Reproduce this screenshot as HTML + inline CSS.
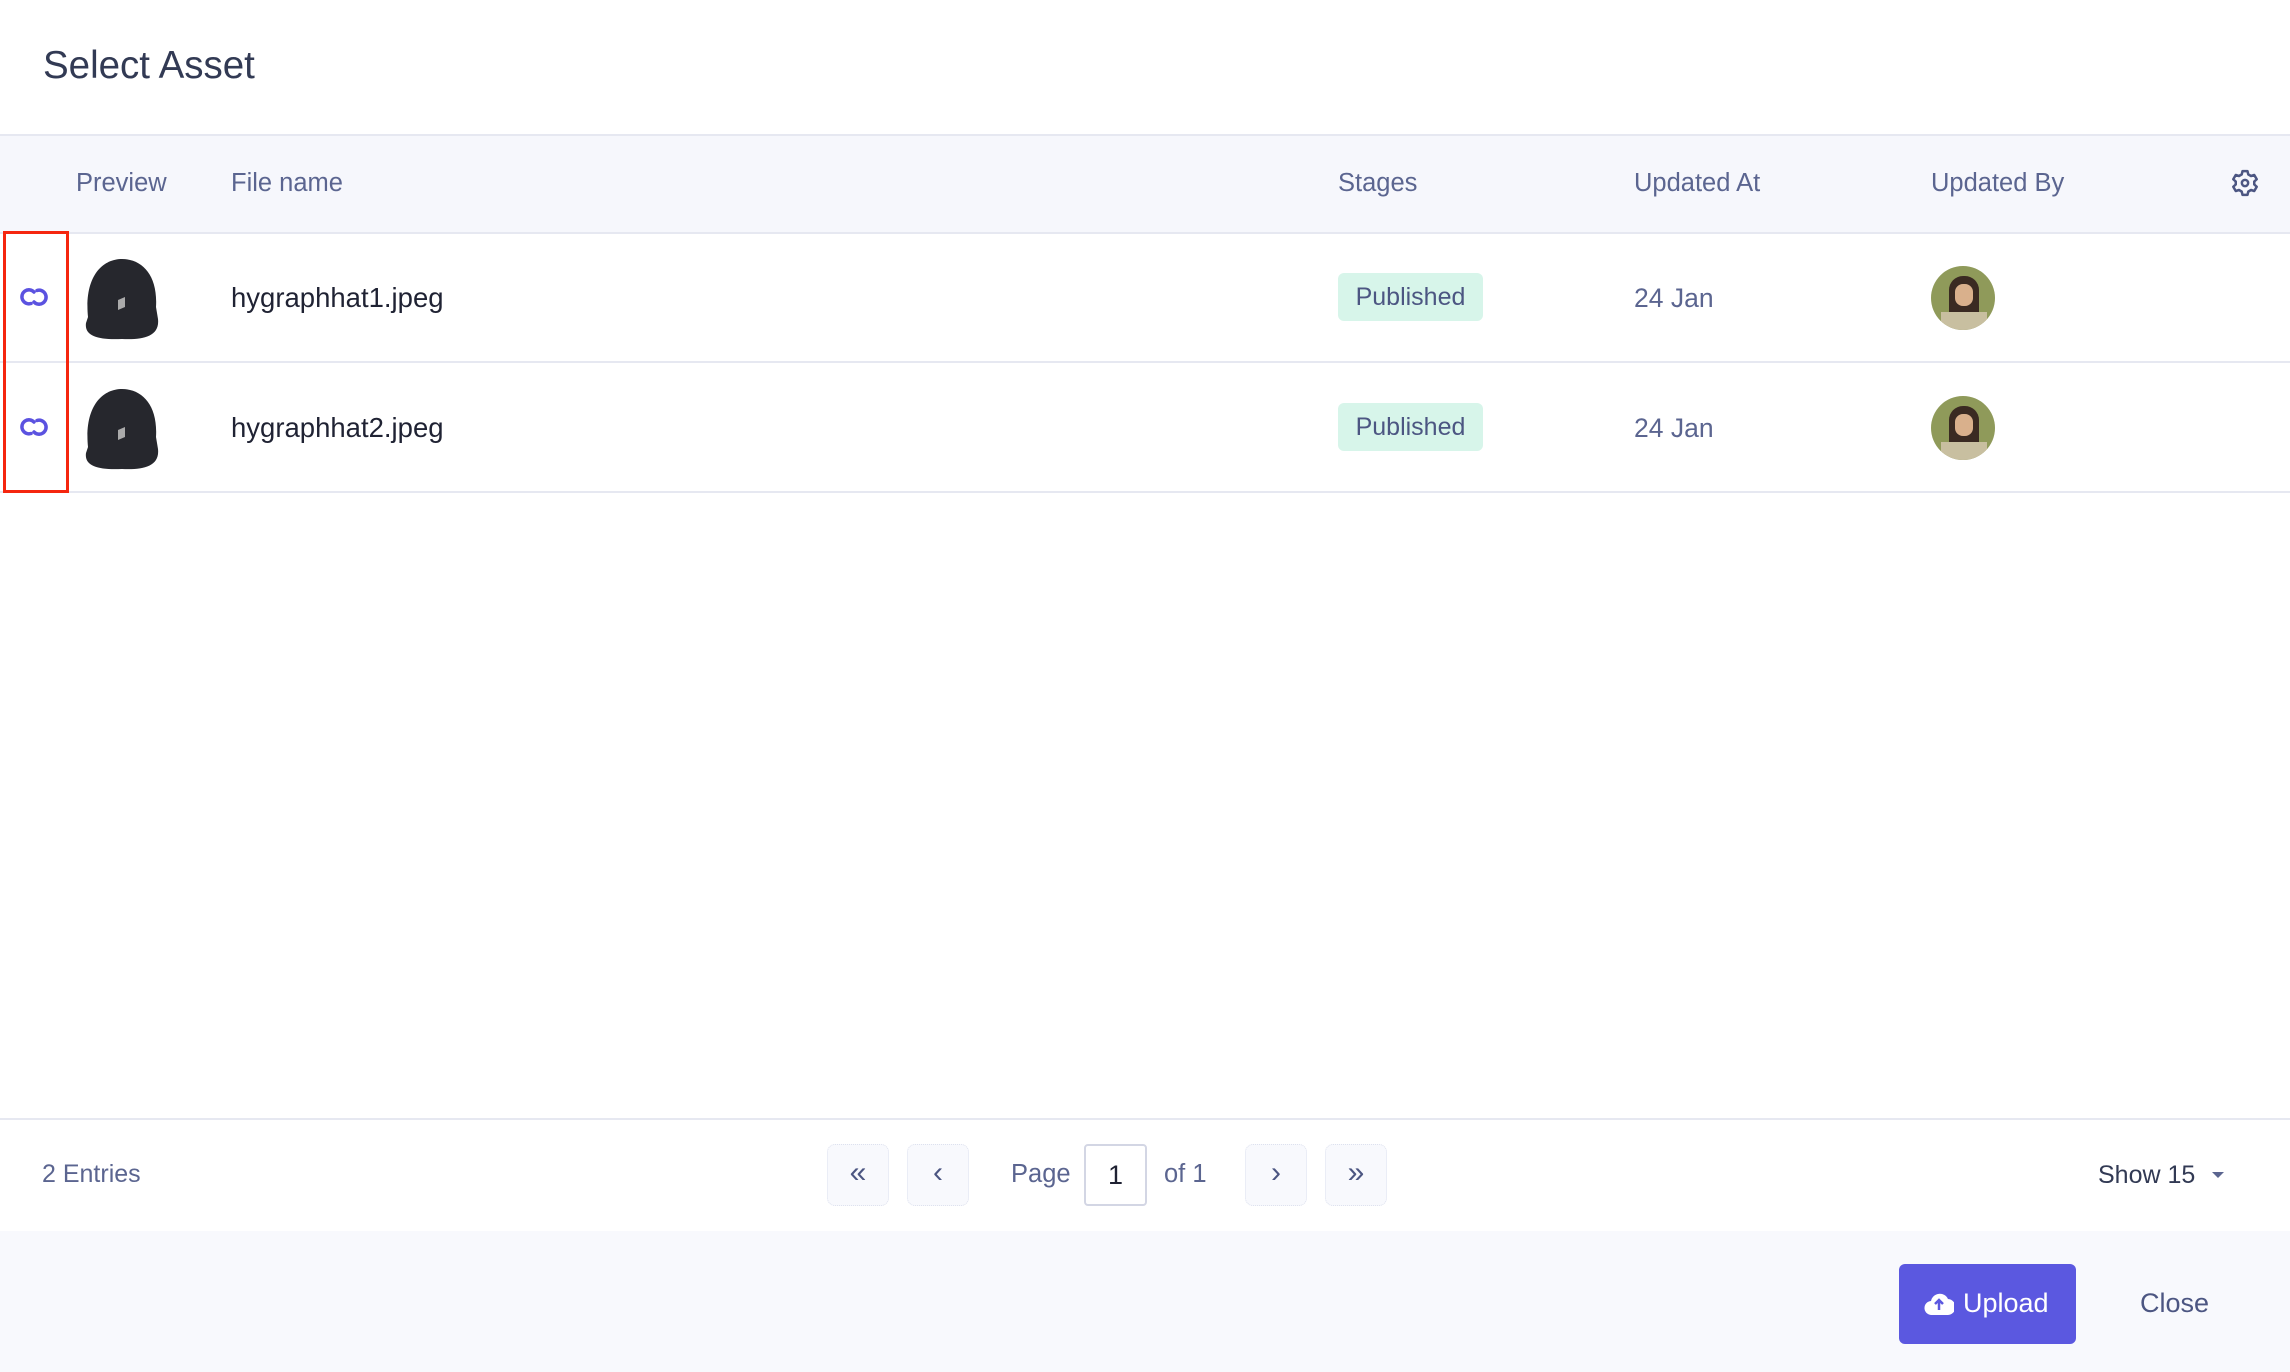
<!DOCTYPE html>
<html><head><meta charset="utf-8"><style>
*{margin:0;padding:0;box-sizing:border-box}
body{width:2290px;height:1372px;background:#fff;font-family:"Liberation Sans",sans-serif;position:relative;overflow:hidden}
.a{position:absolute;white-space:nowrap}
.h{color:#5b6590;font-size:25.5px;top:169px}
.fn{color:#1f2233;font-size:27.5px}
.badge{position:absolute;left:1338px;width:145px;height:48px;background:#d7f5ea;border-radius:6px;color:#4c5682;font-size:25px;text-align:center;line-height:48px}
.date{color:#5b6590;font-size:26.5px;left:1634px}
.pb{position:absolute;top:1144px;width:62px;height:62px;background:#f8f9fd;border:1px dotted #dde1ee;border-radius:8px;color:#4c5682;font-size:30px;text-align:center;line-height:56px}
.av{position:absolute;left:1931px;width:64px;height:64px;border-radius:50%;overflow:hidden;background:#8f9a5a}
</style></head><body>
<div class="a" style="left:43px;top:44px;font-size:38.5px;color:#323a54">Select Asset</div>
<div class="a" style="left:0;top:134px;width:2290px;height:100px;background:#f6f7fc;border-top:2px solid #e6e8f1;border-bottom:2px solid #e6e8f1"></div>
<div class="a h" style="left:76px">Preview</div>
<div class="a h" style="left:231px">File name</div>
<div class="a h" style="left:1338px">Stages</div>
<div class="a h" style="left:1634px">Updated At</div>
<div class="a h" style="left:1931px">Updated By</div>
<svg class="a" style="left:2230px;top:168px" width="30" height="30" viewBox="0 0 24 24" fill="none" stroke="#4c5682" stroke-width="2"><path d="M10 2.5h4l.6 2.6 2.2 1.3 2.6-.8 2 3.4-2 1.8v2.4l2 1.8-2 3.4-2.6-.8-2.2 1.3-.6 2.6h-4l-.6-2.6-2.2-1.3-2.6.8-2-3.4 2-1.8v-2.4l-2-1.8 2-3.4 2.6.8 2.2-1.3z" stroke-linejoin="round"/><circle cx="12" cy="12" r="2.5"/></svg>

<div class="a" style="left:0;top:361px;width:2290px;height:2px;background:#e6e8f1"></div>
<div class="a" style="left:0;top:491px;width:2290px;height:2px;background:#e6e8f1"></div>

<svg class="a" style="left:18px;top:285px" width="32" height="24" viewBox="0 0 32 24" fill="none" stroke="#5b52e0" stroke-width="3.5" stroke-linecap="round"><path d="M13 18.5A7 7 0 1 1 16 7"/><path d="M19 5.5A7 7 0 1 1 16 17"/></svg>
<svg class="a" style="left:18px;top:415px" width="32" height="24" viewBox="0 0 32 24" fill="none" stroke="#5b52e0" stroke-width="3.5" stroke-linecap="round"><path d="M13 18.5A7 7 0 1 1 16 7"/><path d="M19 5.5A7 7 0 1 1 16 17"/></svg>
<svg class="a" style="left:82px;top:257px" width="80" height="84" viewBox="0 0 80 84"><path d="M6 60 C2 20 20 2 40 2 C60 2 76 18 74 50 L76 62 C78 80 60 83 40 82 C18 83 2 80 4 66 Z" fill="#26272d"/><path d="M36 43l7-3v10l-7 3z" fill="#aaa"/></svg>
<svg class="a" style="left:82px;top:387px" width="80" height="84" viewBox="0 0 80 84"><path d="M6 60 C2 20 20 2 40 2 C60 2 76 18 74 50 L76 62 C78 80 60 83 40 82 C18 83 2 80 4 66 Z" fill="#26272d"/><path d="M36 43l7-3v10l-7 3z" fill="#aaa"/></svg>
<div class="a" style="left:3px;top:231px;width:66px;height:262px;border:3px solid #f5260f"></div>

<div class="a fn" style="left:231px;top:282px">hygraphhat1.jpeg</div>
<div class="a fn" style="left:231px;top:412px">hygraphhat2.jpeg</div>
<div class="badge" style="top:273px">Published</div>
<div class="badge" style="top:403px">Published</div>
<div class="a date" style="top:283px">24 Jan</div>
<div class="a date" style="top:413px">24 Jan</div>
<div class="av" style="top:266px"><div style="position:absolute;left:18px;top:10px;width:30px;height:50px;background:#3a2a22;border-radius:14px 14px 4px 4px"></div><div style="position:absolute;left:24px;top:18px;width:18px;height:22px;background:#d9b08c;border-radius:8px"></div><div style="position:absolute;left:10px;top:46px;width:46px;height:20px;background:#c8bfa0"></div></div>
<div class="av" style="top:396px"><div style="position:absolute;left:18px;top:10px;width:30px;height:50px;background:#3a2a22;border-radius:14px 14px 4px 4px"></div><div style="position:absolute;left:24px;top:18px;width:18px;height:22px;background:#d9b08c;border-radius:8px"></div><div style="position:absolute;left:10px;top:46px;width:46px;height:20px;background:#c8bfa0"></div></div>

<div class="a" style="left:0;top:1118px;width:2290px;height:2px;background:#e6e8f1"></div>
<div class="a" style="left:42px;top:1160px;font-size:25px;color:#5b6590">2 Entries</div>
<div class="pb" style="left:827px">«</div>
<div class="pb" style="left:907px">‹</div>
<div class="a" style="left:1011px;top:1160px;font-size:25.5px;color:#5b6590">Page</div>
<div class="a" style="left:1084px;top:1144px;width:63px;height:62px;border:2px solid #d3d6e4;border-radius:4px;font-size:27px;color:#1f2233;text-align:center;line-height:58px">1</div>
<div class="a" style="left:1164px;top:1160px;font-size:25.5px;color:#5b6590">of 1</div>
<div class="pb" style="left:1245px">›</div>
<div class="pb" style="left:1325px">»</div>
<div class="a" style="left:2098px;top:1161px;font-size:25px;color:#323a54">Show 15</div>
<div class="a" style="left:2212px;top:1172px;width:0;height:0;border-left:6px solid transparent;border-right:6px solid transparent;border-top:6px solid #5b6590"></div>

<div class="a" style="left:0;top:1231px;width:2290px;height:141px;background:#f8f9fd"></div>
<div class="a" style="left:1899px;top:1264px;width:177px;height:80px;background:#5b58e0;border-radius:6px"></div>
<svg class="a" style="left:1924px;top:1290px" width="30" height="26" viewBox="0 0 30 26"><path d="M8 25a7 7 0 0 1-1-14A9 9 0 0 1 24 9a7 7 0 0 1-1 16z" fill="#fff"/><path d="M15 20v-9M11 14l4-4 4 4" stroke="#5b58e0" stroke-width="2.5" fill="none"/></svg>
<div class="a" style="left:1963px;top:1288px;font-size:27px;color:#fff">Upload</div>
<div class="a" style="left:2140px;top:1288px;font-size:27px;color:#4c5682">Close</div>
</body></html>
